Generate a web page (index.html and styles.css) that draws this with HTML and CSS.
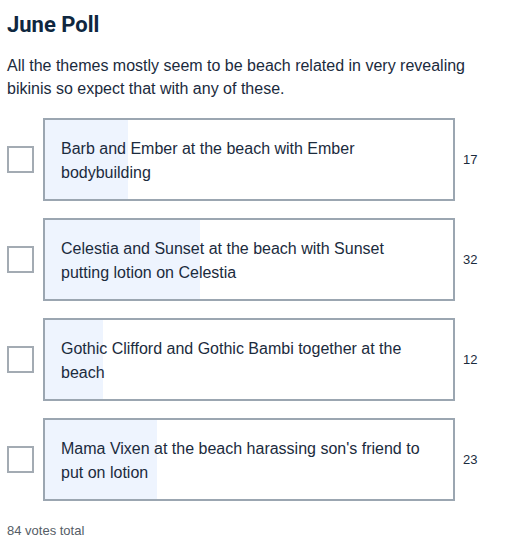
FILE: index.html
```html
<!DOCTYPE html>
<html lang="en">
<head>
    <meta charset="UTF-8" />
    <title>June Poll</title>
    <link rel="stylesheet" href="styles.css">
</head>
<body>
    <div class="poll">
        <h2>June Poll</h2>
        <p class="intro">All the themes mostly seem to be beach related in very revealing bikinis so expect that with any of these.</p>

        <ul class="options">
            <li class="option">
                <span class="check"></span>
                <div class="choice" style="--pct: 20.24%">Barb and Ember at the beach with Ember bodybuilding</div>
                <span class="count">17</span>
            </li>
            <li class="option">
                <span class="check"></span>
                <div class="choice" style="--pct: 38.1%">Celestia and Sunset at the beach with Sunset putting lotion on Celestia</div>
                <span class="count">32</span>
            </li>
            <li class="option">
                <span class="check"></span>
                <div class="choice" style="--pct: 14.29%">Gothic Clifford and Gothic Bambi together at the beach</div>
                <span class="count">12</span>
            </li>
            <li class="option">
                <span class="check"></span>
                <div class="choice" style="--pct: 27.38%">Mama Vixen at the beach harassing son's friend to put on lotion</div>
                <span class="count">23</span>
            </li>
        </ul>

        <p class="total">84 votes total</p>
    </div>
</body>
</html>
```

FILE: styles.css
```css
* {
    margin: 0;
    padding: 0;
    box-sizing: border-box;
    font-family: 'Liberation Sans', Arial, sans-serif;
}

body {
    background: #fff;
    color: #1b2b3d;
}

.poll {
    padding: 10px 7px 8px;
    width: 511px;
}

.poll h2 {
    font-family: Roboto, 'Liberation Sans', sans-serif;
    color: #0f2740;
    font-size: 22px;
    line-height: 30px;
    font-weight: 700;
}

.intro {
    margin-top: 14px;
    font-size: 16px;
    line-height: 23px;
    color: #1b2b3d;
}

.options {
    list-style: none;
    margin-top: 18px;
    display: flex;
    flex-direction: column;
    gap: 17px;
}

.option {
    display: flex;
    align-items: center;
}

.check {
    width: 27px;
    height: 27px;
    border: 2px solid #a3abb3;
    flex-shrink: 0;
}

.choice {
    margin-left: 9px;
    width: 412px;
    min-height: 83px;
    padding: 17px 22px 14px 16px;
    border: 2px solid #9ba6b1;
    font-size: 16px;
    line-height: 24px;
    color: #1b2b3d;
    /* oy oranı kadar açık mavi dolgu */
    background: linear-gradient(to right, #eef4fe var(--pct), #fff var(--pct));
}

.count {
    margin-left: 8px;
    font-size: 13px;
    color: #1b2b3d;
}

.total {
    margin-top: 22px;
    font-size: 13px;
    color: #555d66;
}
```
